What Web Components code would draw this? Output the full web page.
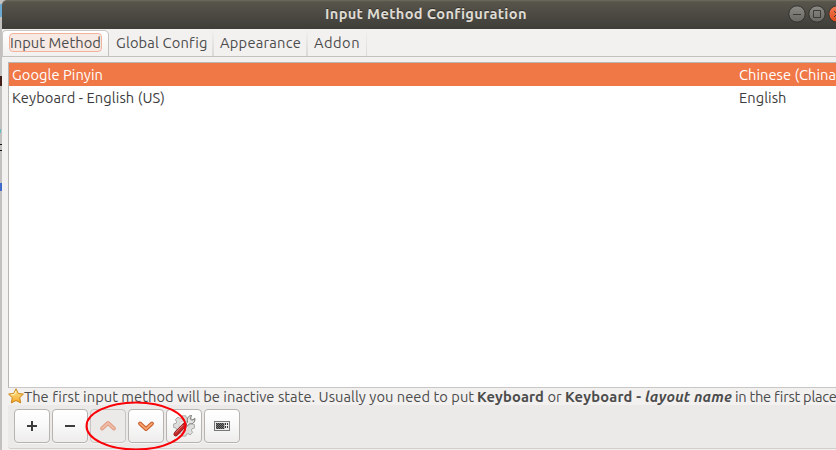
<!DOCTYPE html>
<html lang="en"><head><meta charset="utf-8"><title>Input Method Configuration</title>
<style>
html,body{margin:0;height:450px;overflow:hidden}
body{font:14.667px/20px Ubuntu,"Noto Sans","Open Sans",sans-serif;color:#4c4c4c;background:#c3c1c0}
</style></head><body>
<config-window></config-window>
<script>
const define=(name,html,init)=>customElements.define(name,class extends HTMLElement{
  connectedCallback(){
    if(this.shadowRoot)return;
    this.attachShadow({mode:'open'}).innerHTML=html;
    if(init)init.call(this,this.shadowRoot);
  }
});

// A label that spreads its letters over the width given in "w".
define('fit-label',`<style>:host{display:inline-block;white-space:pre;flex:none}span{display:inline-block}</style><span><slot></slot></span>`,function(r){
  const w=+this.getAttribute('w'),s=r.querySelector('span');
  const n=s.getBoundingClientRect().width;
  s.style.letterSpacing=(w-n)/this.textContent.length+'px';
  this.style.width=w+'px';
});

define('window-button',`<style>
:host{display:block;width:18px;height:18px}
svg{display:block}
</style><svg width="18" height="18" viewBox="0 0 18 18"><defs><linearGradient id="g" x2="0" y2="1"><stop class="a" stop-color="#8b8a84"/><stop class="b" offset="1" stop-color="#686761"/></linearGradient></defs>
<circle cx="9" cy="9" r="8.2" fill="url(#g)" stroke="#33322e"/><path fill="none" stroke="#3c3b37"/></svg>`,function(r){
  const k=this.getAttribute('kind');
  r.querySelector('path').setAttribute('d',{min:'M5 9.5h8',max:'M5.5 5.5h7v7h-7z',close:'M6 6l6 6M12 6l-6 6'}[k]);
  if(k==='close'){r.querySelector('.a').setAttribute('stop-color','#f37b55');r.querySelector('.b').setAttribute('stop-color','#df4a16');}
});

define('title-bar',`<style>
:host{display:flex;position:relative;box-sizing:border-box;height:29px;padding:4px 0 0 323px;background:linear-gradient(#5d5a50,#57544b 5%,#3e3d38);border-top:1px solid #69665a;border-radius:5px 0 0 0;color:#dfdbd2;font-weight:bold;line-height:18px;text-shadow:0 -1px #33322d}
div{display:flex;gap:2px;margin-left:261.500px;flex:none}
</style><fit-label w="201.5">Input Method Configuration</fit-label><div><window-button kind="min"></window-button><window-button kind="max"></window-button><window-button kind="close"></window-button></div>`);

define('tab-item',`<style>
:host{display:flex;box-sizing:border-box;height:26px;flex:none;padding:3px 5px 0 7px;border-right:2px solid transparent;border-image:linear-gradient(#f2f1f0,#dad8d6) 1}
:host([active]){border:1px solid #c9c6c3;border-right:1px solid #c4c1be;border-bottom:0;border-image:none;border-radius:4px 5px 0 0;background:linear-gradient(#fff,#f2f1f0);padding:2px 6px 0 6px}
:host([last]){border-right-width:1px;padding-right:6px}
.t{display:block;height:20px}
:host([active]) .t{height:17px;line-height:18px;border:1px solid #f3b39b;border-radius:4px;background:#f7e9e4}
</style><span class="t"><slot></slot></span>`);

define('method-row',`<style>
:host{display:flex;box-sizing:border-box;height:23px;padding:2px 0 0 3px;line-height:20px;color:#3c3c3c}
:host([selected]){background:#f07746;color:#fff}
.n{width:727px;flex:none}
</style><div class="n"><slot name="name"></slot></div><slot name="lang"></slot>`);

define('tool-button',`<style>
:host{display:flex;box-sizing:border-box;width:36px;height:34px;border:1px solid #b6b3b0;border-radius:4px;background:linear-gradient(#fff,#fafafa 40%,#eeedec);box-shadow:0 1px #f7f6f5;align-items:center;justify-content:center}
:host([disabled]){background:#ebeae9;border-color:#c7c4c2}
::slotted(svg){display:block}
</style><slot></slot>`);

define('note-line',`<style>
:host{display:flex;height:17px;line-height:18px;overflow:visible;white-space:pre}
svg{width:16px;height:17px;flex:none}
i{font-weight:bold}
</style><svg viewBox="0 0 16 17"><defs><linearGradient id="s" x2="0" y2="1"><stop stop-color="#ffe88c"/><stop offset="1" stop-color="#f5a72c"/></linearGradient></defs><path d="M8 .8l2.3 4.7 5.1.6-3.7 3.600 1 5.200L8 12.500l-4.700 2.400 1-5.200L.6 6.100l5.100-.6z" fill="url(#s)" stroke="#cc8415" stroke-linejoin="round"/><path d="M8 3L6.300 6.500l-3.200.4" fill="none" stroke="#fff6c9"/></svg>
<fit-label w="453">The first input method will be inactive state. Usually you need to put </fit-label><fit-label w="67"><b>Keyboard</b></fit-label><fit-label w="21"> or </fit-label><fit-label w="80"><b>Keyboard - </b></fit-label><fit-label w="87"><i>layout name</i></fit-label><fit-label w="104"> in the first place</fit-label>`);

define('config-window',`<style>
:host{display:block;box-sizing:border-box;width:836px;height:450px;padding-left:2px;overflow:hidden;position:relative;background:linear-gradient(#6ba9d0,#6ba9d0) 0 4px/2px 13px no-repeat,linear-gradient(#41201a,#41201a) 0 76px/2px 10px no-repeat,linear-gradient(#65bec2,#65bec2) 0 129px/1px 4px no-repeat,linear-gradient(#111,#111) 0 144px/2px 1px no-repeat,linear-gradient(#111,#111) 0 150px/2px 1px no-repeat,linear-gradient(#416bca,#416bca) 0 183px/2px 8px no-repeat,#c3c1c0}
main{height:421px;background:#f2f1f0;overflow:hidden}
nav{display:flex;height:27px;box-sizing:border-box;border-bottom:1px solid #c3c0bd;padding:0;margin-top:1px}
.list{box-sizing:border-box;height:326px;margin:5px 0 0 6px;background:#fff;border:1px solid #b8b5b2;border-right:0;border-bottom-color:#c9c7c5}
note-line{margin-left:6px}
.tools{display:flex;gap:2px;box-sizing:border-box;height:44px;margin-left:6px;padding:4px 6px;background:#ebeae9;border-bottom:1px solid #d1cecb;border-radius:0 0 0 3px}
.mark{position:absolute;left:84px;top:400px;overflow:visible}
</style>
<title-bar></title-bar>
<main><nav>
<tab-item active><fit-label w="91">Input Method</fit-label></tab-item><tab-item><fit-label w="91">Global Config</fit-label></tab-item><tab-item style="padding-left:6px"><fit-label w="81">Appearance</fit-label></tab-item><tab-item last style="padding-left:6px"><fit-label w="46">Addon</fit-label></tab-item>
</nav>
<div class="list">
<method-row selected><fit-label slot="name" w="91">Google Pinyin</fit-label><fit-label slot="lang" w="97">Chinese (China</fit-label></method-row>
<method-row><fit-label slot="name" w="153">Keyboard - English (US)</fit-label><fit-label slot="lang" w="47.5">English</fit-label></method-row>
</div>
<note-line></note-line>
<div class="tools">
<tool-button><svg width="16" height="16"><path d="M3 8h10M8 3v10" stroke="#3c3c3c" stroke-width="2"/></svg></tool-button>
<tool-button><svg width="16" height="16"><path d="M3 8h10" stroke="#3c3c3c" stroke-width="2"/></svg></tool-button>
<tool-button disabled><svg width="18" height="16"><path d="M3 10.500l6-5.500 6 5.500" fill="none" stroke="#df9b80" stroke-width="3.800" stroke-linecap="round" stroke-linejoin="round"/><path d="M3 10.500l6-5.500 6 5.500" fill="none" stroke="#f0bda8" stroke-width="1.800" stroke-linecap="round"/></svg></tool-button>
<tool-button><svg width="18" height="16"><path d="M3 5.500l6 5.500 6-5.500" fill="none" stroke="#c85b29" stroke-width="3.800" stroke-linecap="round" stroke-linejoin="round"/><path d="M3 5.500l6 5.500 6-5.500" fill="none" stroke="#f6a36d" stroke-width="1.800" stroke-linecap="round"/></svg></tool-button>
<tool-button><svg width="24" height="24" viewBox="0 0 24 24"><path d="M10 2h4l.6 2.600 1.700.8L18.800 4l2.700 2.800-1.400 2.400.6 1.600 2.600.7v3.800l-2.600.7-.7 1.700 1.400 2.300-2.700 2.700-2.400-1.400-1.700.7L14 24h-4l-.7-2.700-1.600-.7-2.400 1.500-2.700-2.800L4 17l-.7-1.700-2.600-.7v-3.800l2.600-.6.7-1.600-1.400-2.500L5.300 3.500l2.400 1.400 1.600-.7z" fill="#dededc" stroke="#a4a4a1" transform="translate(1 0) scale(.92)"/><circle cx="12" cy="12" r="5" fill="#f0f0ef" stroke="#ccc"/><path d="M11 12.500l4.500-4.500C14.500 4.500 16.500 1.500 19.500 1.500L18.300 4.800 19.800 6.300 23 4.500c0 4-2.500 6-5.300 5.200L13 14.500z" fill="#e3e3e1" stroke="#656563" stroke-width=".9"/><path d="M3.800 20l8.700-9" stroke="#8e1616" stroke-width="4.600" stroke-linecap="round"/><path d="M3.800 20l8.700-9" stroke="#c52b2b" stroke-width="3.200" stroke-linecap="round"/><path d="M3.800 18.500l7.200-7.500" stroke="#e48080"/></svg></tool-button>
<tool-button><svg width="16" height="10" viewBox="0 0 16 10"><rect x=".5" y=".5" width="15" height="9" fill="#eee" stroke="#777"/><path d="M2 2h8.500v6H2z" fill="#777"/><path d="M2 2.500h8M2 4.500h8M2 6.500h8" stroke="#333" stroke-dasharray="1 1"/><path d="M3 3.500h8M3 5.500h8M3 7.500h8" stroke="#333" stroke-dasharray="1 1"/><path d="M11.500 2v6M13.500 2v6" stroke="#333" stroke-dasharray="2 1"/></svg></tool-button>
</div></main>
<svg class="mark" width="104" height="50"><ellipse cx="52" cy="26" rx="49.500" ry="23.500" fill="none" stroke="#fb0007" stroke-width="2"/></svg>`);
</script></body></html>
